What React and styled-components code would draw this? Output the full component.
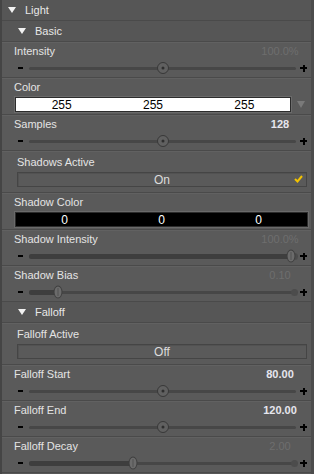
import React from "react";
import styled, { createGlobalStyle } from "styled-components";

const Global = createGlobalStyle`
  html, body { margin: 0; padding: 0; background: #575757; }
  body { font-family: "Liberation Sans", Arial, sans-serif; font-size: 11px; }
`;

const Panel = styled.div`
  width: 314px;
  height: 474px;
  box-sizing: border-box;
  background: #575757;
  border-left: 2px solid #454545;
  border-right: 3px solid #4c4c4c;
  display: flex;
  flex-direction: column;
  overflow: hidden;
`;

const Header = styled.div`
  height: 20px;
  flex: none;
  display: flex;
  align-items: center;
  gap: 9px;
  padding-left: ${(p) => p.$indent}px;
  color: #e8e8e8;
  font-size: 11px;
  border-bottom: 1px solid #4a4a4a;
  background: #565656;
`;

const Tri = styled.span`
  width: 0;
  height: 0;
  border-left: 4px solid transparent;
  border-right: 4px solid transparent;
  border-top: 6px solid #f2f2f2;
`;

const Row = styled.div`
  flex: none;
  display: flex;
  flex-direction: column;
  background: #5a5a5a;
  border-bottom: 1px solid #4a4a4a;
  border-top: 1px solid #616161;
  padding: ${(p) => p.$pad || "0 0 1px"};
`;

const LabelLine = styled.div`
  height: 15px;
  display: flex;
  align-items: center;
  justify-content: space-between;
  padding: 0 11px 0 ${(p) => p.$indent || 12}px;
  color: #e4e4e4;
`;

const Value = styled.span`
  width: 40px;
  text-align: center;
  color: ${(p) => (p.$dim ? "#6e6e6e" : "#e6e6ee")};
  font-weight: ${(p) => (p.$dim ? "normal" : "bold")};
`;

const SliderLine = styled.div`
  height: 16px;
  margin-top: 2px;
  display: grid;
  grid-template-columns: 11px 1fr 11px;
  align-items: center;
  padding: 0 4px 0 16px;
`;

const Minus = styled.span`
  width: 5px;
  height: 2px;
  background: #000;
`;

const Plus = styled.span`
  position: relative;
  justify-self: end;
  width: 7px;
  height: 7px;
  &::before,
  &::after {
    content: "";
    position: absolute;
    background: #000;
  }
  &::before {
    left: 0;
    top: 2.5px;
    width: 7px;
    height: 2px;
  }
  &::after {
    left: 2.5px;
    top: 0;
    width: 2px;
    height: 7px;
  }
`;

const Track = styled.div`
  position: relative;
  height: 3px;
  background: #474747;
  border-radius: 2px;
`;

const Fill = styled.div`
  position: absolute;
  left: 0;
  top: -1px;
  height: 5px;
  background: #3e3e3e;
  border-radius: 2px;
`;

const EndDot = styled.div`
  position: absolute;
  right: -2px;
  top: -2px;
  width: 7px;
  height: 7px;
  border-radius: 50%;
  background: #4c4c4c;
`;

const RoundKnob = styled.div`
  position: absolute;
  top: 50%;
  width: 12px;
  height: 12px;
  border-radius: 50%;
  box-sizing: border-box;
  border: 1.5px solid #383838;
  background: #606060;
  transform: translate(-50%, -50%);
  &::after {
    content: "";
    position: absolute;
    left: 50%;
    top: 50%;
    width: 3px;
    height: 3px;
    border-radius: 50%;
    background: #2e2e2e;
    transform: translate(-50%, -50%);
  }
`;

const OvalKnob = styled.div`
  position: absolute;
  top: 50%;
  width: 9px;
  height: 13px;
  border-radius: 50%;
  box-sizing: border-box;
  border: 1px solid #3f3f3f;
  background: #6b6b6b;
  transform: translate(-50%, -50%);
  &::after {
    content: "";
    position: absolute;
    left: 3px;
    top: 2px;
    width: 1px;
    height: 7px;
    border-left: 1px dotted #3a3a3a;
  }
`;

const FieldLine = styled.div`
  display: flex;
  align-items: center;
  gap: 4px;
  padding: 3px 3px 2px 13px;
`;

const ColorField = styled.div`
  flex: 1;
  height: 13px;
  display: grid;
  grid-template-columns: repeat(3, 1fr);
  align-items: center;
  background: ${(p) => p.$bg};
  color: ${(p) => p.$fg};
  border: 1px solid #2c2c2c;
  outline: 1px solid #6a6a6a;
  font-size: 12px;
  text-align: center;
`;

const DropArrow = styled.span`
  width: 0;
  height: 0;
  margin: 0 3px 0 2px;
  border-left: 4px solid transparent;
  border-right: 4px solid transparent;
  border-top: 7px solid #7a7a7a;
`;

const ToggleLine = styled.div`
  padding: 3px 4px 4px 15px;
`;

const Toggle = styled.div`
  position: relative;
  height: 13px;
  border: 1px solid #454545;
  box-shadow: inset 1px 1px 0 #525252;
  display: flex;
  align-items: center;
  justify-content: center;
  color: #dcdcdc;
  font-size: 12px;
`;

const Check = styled.svg`
  position: absolute;
  right: 3px;
  top: 2px;
`;

function Slider({ pos, knob }) {
  return (
    <SliderLine>
      <Minus />
      <Track>
        {knob === "oval" && <Fill style={{ width: `${pos * 100}%` }} />}
        {knob === "oval" && <EndDot />}
        {knob === "oval" ? (
          <OvalKnob style={{ left: `${pos * 100}%` }} />
        ) : (
          <RoundKnob style={{ left: `${pos * 100}%` }} />
        )}
      </Track>
      <Plus />
    </SliderLine>
  );
}

function SliderRow({ label, value, dim, pos, knob }) {
  return (
    <Row>
      <LabelLine>
        <span>{label}</span>
        <Value $dim={dim}>{value}</Value>
      </LabelLine>
      <Slider pos={pos} knob={knob} />
    </Row>
  );
}

function ColorRow({ label, bg, fg, values, arrow }) {
  return (
    <Row $pad="0">
      <LabelLine>
        <span>{label}</span>
      </LabelLine>
      <FieldLine>
        <ColorField $bg={bg} $fg={fg}>
          {values.map((v, i) => (
            <span key={i}>{v}</span>
          ))}
        </ColorField>
        {arrow && <DropArrow />}
      </FieldLine>
    </Row>
  );
}

function ToggleRow({ label, value, checked }) {
  return (
    <Row $pad="2px 0 1px">
      <LabelLine $indent={15}>
        <span>{label}</span>
      </LabelLine>
      <ToggleLine>
        <Toggle>
          {value}
          {checked && (
            <Check width="9" height="8" viewBox="0 0 9 8">
              <path d="M1 4 L3.5 6.5 L8 1" stroke="#f2c200" strokeWidth="2" fill="none" />
            </Check>
          )}
        </Toggle>
      </ToggleLine>
    </Row>
  );
}

export default function App() {
  return (
    <>
      <Global />
      <Panel>
        <Header $indent={6}>
          <Tri />
          Light
        </Header>
        <Header $indent={16}>
          <Tri />
          Basic
        </Header>
        <SliderRow label="Intensity" value="100.0%" dim pos={0.5} knob="round" />
        <ColorRow label="Color" bg="#ffffff" fg="#000" values={[255, 255, 255]} arrow />
        <SliderRow label="Samples" value="128" pos={0.5} knob="round" />
        <ToggleRow label="Shadows Active" value="On" checked />
        <ColorRow label="Shadow Color" bg="#000" fg="#fff" values={[0, 0, 0]} />
        <SliderRow label="Shadow Intensity" value="100.0%" dim pos={0.98} knob="oval" />
        <SliderRow label="Shadow Bias" value="0.10" dim pos={0.11} knob="oval" />
        <Header $indent={16}>
          <Tri />
          Falloff
        </Header>
        <ToggleRow label="Falloff Active" value="Off" />
        <SliderRow label="Falloff Start" value="80.00" pos={0.5} knob="round" />
        <SliderRow label="Falloff End" value="120.00" pos={0.5} knob="round" />
        <SliderRow label="Falloff Decay" value="2.00" dim pos={0.39} knob="oval" />
      </Panel>
    </>
  );
}
